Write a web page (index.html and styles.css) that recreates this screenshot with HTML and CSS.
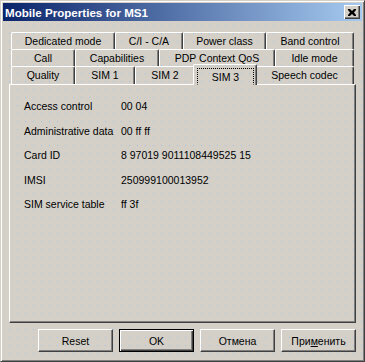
FILE: index.html
```html
<!DOCTYPE html>
<html>
<head>
	<title>Mobile Properties for MS1</title>
	<link rel="stylesheet" href="styles.css">
</head>
<body>
	<div class="window">
		<div class="titlebar">
			<span class="title">Mobile Properties for MS1</span>
			<span class="close">
				<svg width="8" height="7" viewBox="0 0 8 7"><path d="M0 0h2l2 2 2-2h2v1L6 3.5 8 6v1H6L4 5 2 7H0V6l2-2.5L0 1z" fill="#000"/></svg>
			</span>
		</div>
		<div class="body">
			<div class="tabs">
				<div class="tab-row">
					<div class="tab w104">Dedicated mode</div>
					<div class="tab w68">C/I - C/A</div>
					<div class="tab w83">Power class</div>
					<div class="tab w88">Band control</div>
				</div>
				<div class="tab-row">
					<div class="tab w64">Call</div>
					<div class="tab w84">Capabilities</div>
					<div class="tab w116">PDP Context QoS</div>
					<div class="tab w79">Idle mode</div>
				</div>
				<div class="tab-row front">
					<div class="tab w64">Quality</div>
					<div class="tab w60">SIM 1</div>
					<div class="tab w60">SIM 2</div>
					<div class="tab w60 active"><span class="focus">SIM 3</span></div>
					<div class="tab w99">Speech codec</div>
				</div>
			</div>
			<div class="page">
				<div class="field"><span class="label">Access control</span><span class="value">00 04</span></div>
				<div class="field"><span class="label">Administrative data</span><span class="value">00 ff ff</span></div>
				<div class="field"><span class="label">Card ID</span><span class="value">8 97019 9011108449525 15</span></div>
				<div class="field"><span class="label">IMSI</span><span class="value">250999100013952</span></div>
				<div class="field"><span class="label">SIM service table</span><span class="value">ff 3f</span></div>
			</div>
			<div class="buttons">
				<span class="btn">Reset</span>
				<span class="btn default">OK</span>
				<span class="btn">Отмена</span>
				<span class="btn">При<u>м</u>енить</span>
			</div>
		</div>
	</div>
</body>
</html>
```

FILE: styles.css
```css
*{box-sizing: border-box;}
body{margin: 0;}

/* design grid: light blue dot every 8px */
.window, .tab.active{
	background-color: #d4d0c8;
	background-image: conic-gradient(from 270deg at 1px 1px, #9cc4ec 90deg, #d4d0c8 90deg);
	background-size: 8px 8px;
	background-repeat: repeat;
	background-origin: border-box;
}
.window{ background-position: 1px 1px; }
.tab.active{ background-position: 0 1px; }

.window{
	width: 365px;
	height: 362px;
	border: 1px solid;
	border-color: #d4d0c8 #404040 #404040 #d4d0c8;
	box-shadow: inset 1px 1px #fff, inset -1px -1px #808080;
	padding: 2px;
	display: flex;
	flex-direction: column;
	font-family: "Liberation Sans", Arial, sans-serif;
	font-size: 10.5px;
	color: #000;
}

.titlebar{
	height: 18px;
	display: flex;
	align-items: center;
	justify-content: space-between;
	padding: 0 2px 0 2px;
	background: linear-gradient(to right, #0a246a, #a6caf0);
	color: #fff;
}
.title{
	font-weight: bold;
	font-size: 11.6px;
}
.close{
	width: 16px;
	height: 14px;
	display: flex;
	align-items: center;
	justify-content: center;
	background: #d4d0c8;
	box-shadow: inset 1px 1px #fff, inset -1px -1px #404040, inset -2px -2px #808080;
}

.body{
	flex: 1;
	display: flex;
	flex-direction: column;
	padding: 11px 6px 0 6px;
}

.tabs{
	padding: 0 2px;
}
.tab-row{
	display: flex;
	height: 17px;
}
.tab-row.front{ height: 18px; }
.tab{
	display: flex;
	align-items: center;
	justify-content: center;
	border-top: 1px solid #fff;
	border-left: 1px solid #fff;
	border-right: 1px solid #404040;
	box-shadow: inset -1px 0 #808080;
	border-radius: 2px 2px 0 0;
	white-space: nowrap;
	padding-bottom: 1px;
}
.w60{ width: 60px; }
.w64{ width: 64px; }
.w68{ width: 68px; }
.w79{ width: 79px; }
.w83{ width: 83px; }
.w84{ width: 84px; }
.w88{ width: 88px; }
.w99{ width: 99px; }
.w104{ width: 104px; }
.w116{ width: 116px; }

.tab.active{
	position: relative;
	z-index: 1;
	margin: -2px -2px -1px -2px;
	width: 64px;
	padding: 3px 2px 0 3px;
	align-items: stretch;
}
.focus{
	flex: 1;
	display: flex;
	align-items: center;
	justify-content: center;
	border: 1px dotted #000;
	border-bottom-color: transparent;
}

.page{
	height: 239px;
	border: 1px solid;
	border-color: #fff #404040 #404040 #fff;
	box-shadow: inset -1px -1px #808080;
	padding: 9px 14px 0 14px;
}
.field{
	display: flex;
	align-items: center;
	height: 24.5px;
}
.label{ width: 97px; }

.buttons{
	display: flex;
	justify-content: flex-end;
	gap: 6px;
	margin-top: 6px;
}
.btn{
	width: 75px;
	height: 23px;
	display: flex;
	align-items: center;
	justify-content: center;
	border: 1px solid;
	border-color: #fff #404040 #404040 #fff;
	box-shadow: inset -1px -1px #808080;
}
.btn.default{
	border-color: #000;
	box-shadow: inset 1px 1px #fff, inset -1px -1px #404040, inset -2px -2px #808080;
}
```
